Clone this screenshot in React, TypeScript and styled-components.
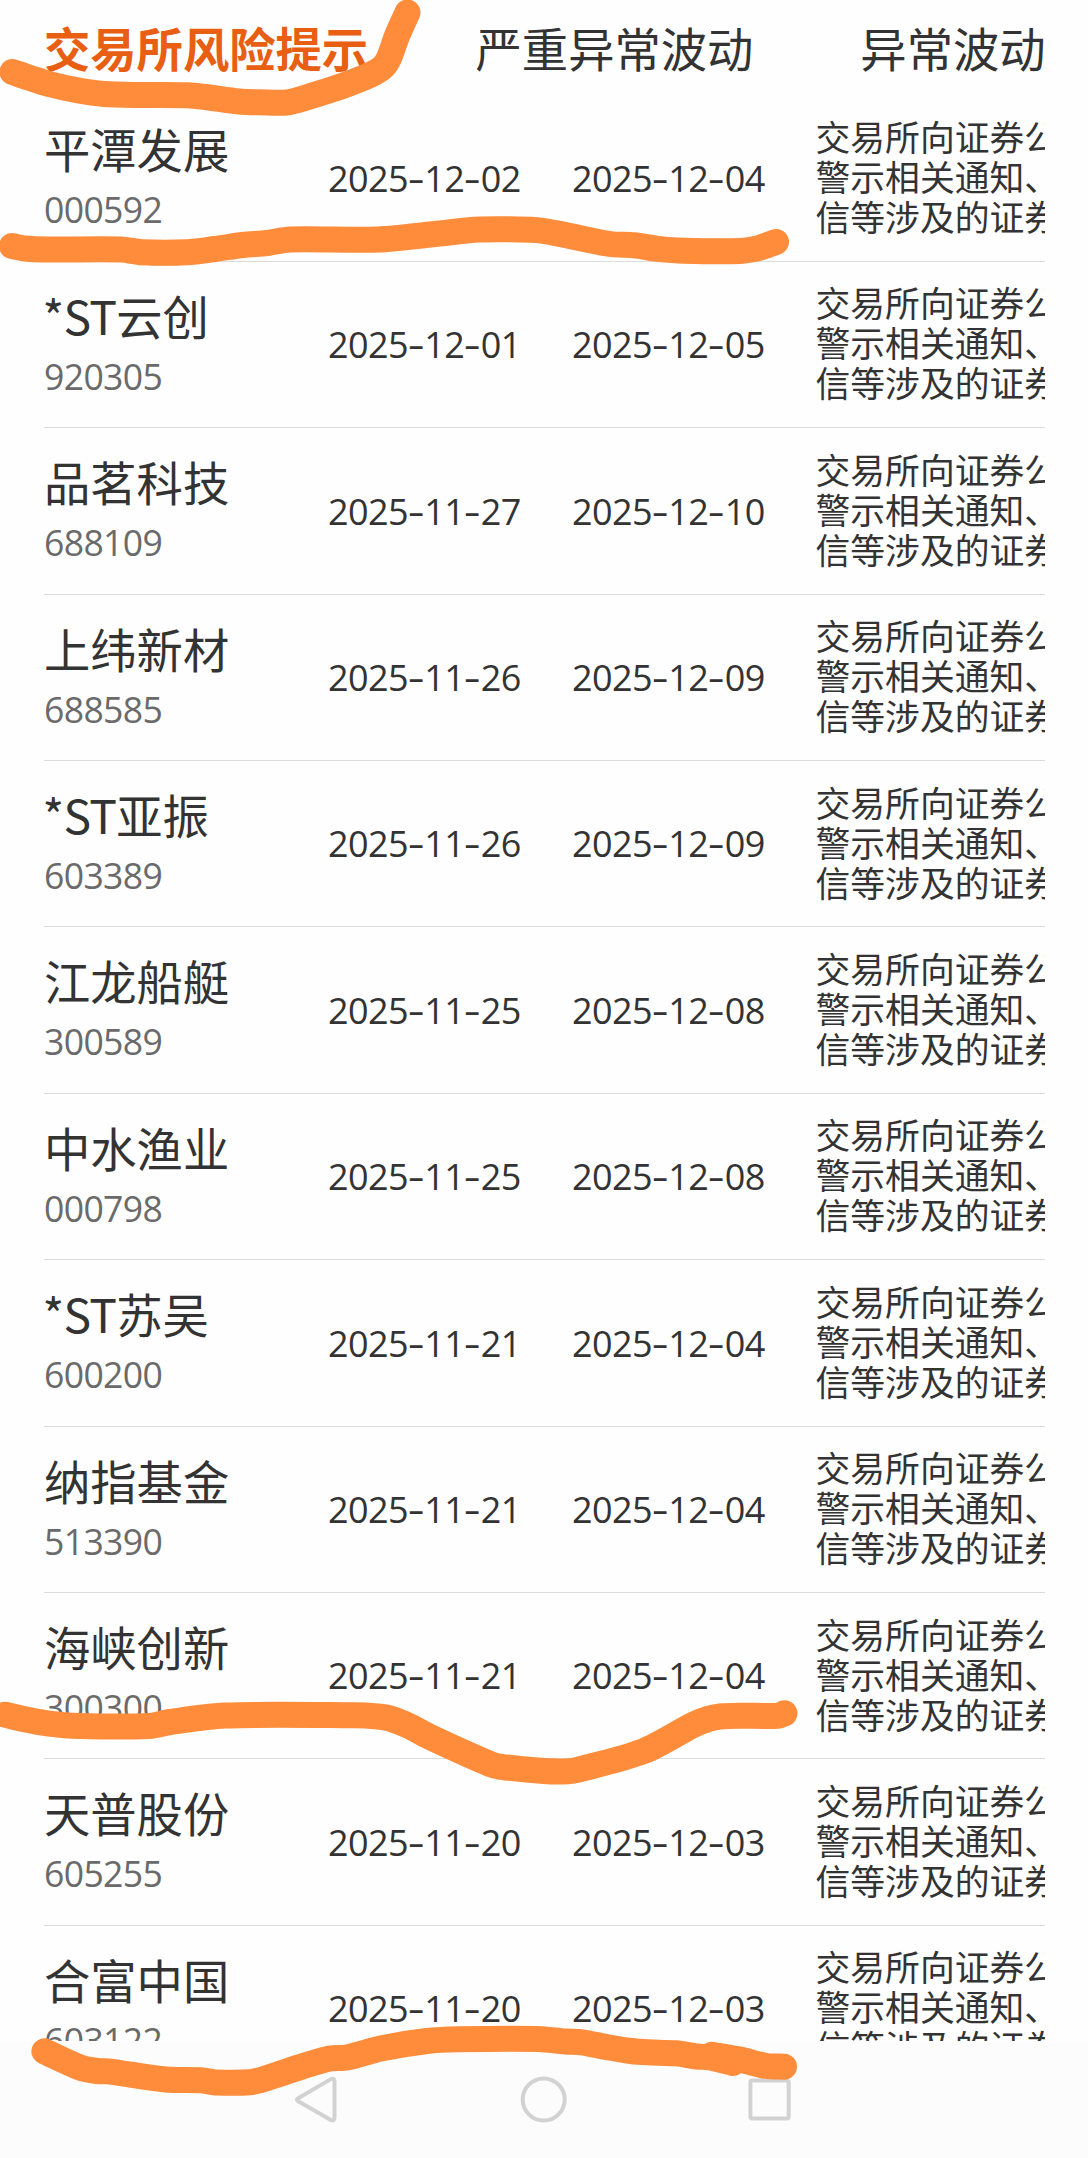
import React from "react";
import styled, { createGlobalStyle } from "styled-components";

const cjk = `"Noto Sans CJK SC", sans-serif`;
const numeric = `"Open Sans", "Noto Sans", sans-serif`;

const GlobalStyle = createGlobalStyle`
  body { margin: 0; background: #fefefe; }
  * { box-sizing: border-box; }
`;

const Screen = styled.div`
  position: relative;
  display: flex;
  flex-direction: column;
  width: 1088px;
  height: 2158px;
  overflow: hidden;
  background: #fefefe;
  color: #333;
  font-family: ${cjk};
`;

const Tabs = styled.nav`
  display: flex;
  flex: none;
  height: 95.4px;
  margin: 0 43px 0 44px;
  padding-top: 12px;
  overflow: hidden;
`;

const Tab = styled.div<{ $active?: boolean; $gap?: number }>`
  flex: none;
  margin-left: ${(p) => p.$gap ?? 0}px;
  font-size: 46.3px;
  line-height: 70px;
  white-space: nowrap;
  font-weight: ${(p) => (p.$active ? 700 : 400)};
  color: ${(p) => (p.$active ? "#e85f14" : "#333")};
`;

const List = styled.main`
  flex: 1;
  min-height: 0;
  overflow: hidden;
  margin: 0 43px 0 44px;
`;

const Row = styled.div`
  display: grid;
  grid-template-columns: 272px 244px 255.5px 1fr;
  height: 166.4px;
  border-bottom: 1px solid #dcdcdc;
`;

const Stock = styled.div`
  display: flex;
  flex-direction: column;
  padding-top: 19px;
`;

const Name = styled.div`
  font-size: 46.3px;
  line-height: 70px;
  height: 70px;
  margin-top: -1px;
  margin-bottom: 1px;
  white-space: nowrap;
`;

const Prefix = styled.span`
  margin-left: -1.5px;
  letter-spacing: -0.7px;
`;

const Code = styled.div`
  font-family: ${numeric};
  font-size: 35.6px;
  line-height: 50px;
  letter-spacing: -0.65px;
  color: #6a6a6a;
`;

const DateCell = styled.div`
  display: flex;
  align-items: center;
  padding: 1.4px 0 0 12px;
  font-family: ${numeric};
  font-size: 36px;
  line-height: 50px;
  letter-spacing: -0.6px;
  white-space: nowrap;
`;

const Dash = styled.span`
  display: inline-block;
  width: 16.4px;
  text-align: center;
  letter-spacing: 0;
  transform: scaleX(1.45);
`;

const Note = styled.div`
  display: flex;
  flex-direction: column;
  justify-content: center;
  padding-bottom: 4px;
  overflow: hidden;
  font-size: 34.8px;
  line-height: 40px;
  white-space: nowrap;
`;

const NavBar = styled.footer`
  flex: none;
  display: flex;
  justify-content: center;
  gap: 178px;
  height: 117px;
  padding-top: 34px;
  background: #fcfcfc;
`;

const NavIcon = styled.svg`
  width: 50px;
  height: 50px;
  fill: none;
  stroke: #d2d2d2;
  stroke-width: 4;
  stroke-linejoin: round;
`;

const Ink = styled.svg`
  position: absolute;
  inset: 0;
  width: 1088px;
  height: 2158px;
  pointer-events: none;
  fill: none;
  stroke: #ff8c3a;
  stroke-width: 26;
  stroke-linecap: round;
  stroke-linejoin: round;
`;

const stocks: [string, string, string, string][] = [
  ["平潭发展", "000592", "2025-12-02", "2025-12-04"],
  ["*ST云创", "920305", "2025-12-01", "2025-12-05"],
  ["品茗科技", "688109", "2025-11-27", "2025-12-10"],
  ["上纬新材", "688585", "2025-11-26", "2025-12-09"],
  ["*ST亚振", "603389", "2025-11-26", "2025-12-09"],
  ["江龙船艇", "300589", "2025-11-25", "2025-12-08"],
  ["中水渔业", "000798", "2025-11-25", "2025-12-08"],
  ["*ST苏吴", "600200", "2025-11-21", "2025-12-04"],
  ["纳指基金", "513390", "2025-11-21", "2025-12-04"],
  ["海峡创新", "300300", "2025-11-21", "2025-12-04"],
  ["天普股份", "605255", "2025-11-20", "2025-12-03"],
  ["合富中国", "603122", "2025-11-20", "2025-12-03"],
];

const noteLines = ["交易所向证券公", "警示相关通知、", "信等涉及的证券"];

const strokes = [
  "12.5,72 30,78 49,84 76,90 104,94 140,95 187,95.3 205,97 239,101.5 260,102.3 288,102.3 319,93.5 345,85 371,74.5 383,67 389,58 397,36 407.5,12.5",
  "12,246 25,248.5 48,249.5 121,249.5 142,252.3 187,252.3 215,249 243,245 267,243 290,239.5 378,239.5 440,233.5 479,229.5 531,229.7 544,231 565,235 610,244 634,245.3 658,248.8 684,250.7 740,251 759,248 776,242",
  "5,1714.7 21,1718.5 47,1723.3 80,1726 149,1726 170,1722 225,1715.5 354,1715.3 378,1716.5 390,1718.5 409,1726 430,1737 490,1764 501,1766.8 544,1771 568,1771.3 579,1769.5 644,1751 693,1725 708,1719 720,1716.5 740,1715.7 778,1715.7 784.5,1713.3",
  "44.4,2051.3 80,2067.5 97,2071 108,2071.3 166,2079.5 201,2080.3 215,2082.4 250,2082.3 264,2079 302,2066.5 330,2058.5 347,2057.5 382,2048.3 427,2041 458,2039.3 538,2039 565,2041.5 582,2042.3 606,2047 631,2051 648,2052.3 676,2053.3 697,2056.5 710,2057.5 733,2063",
  "712,2054.7 742,2060 766,2066 784,2066.7",
];

/* Catmull-Rom spline through the marker's sample points, with short handles. */
function smooth(points: string) {
  const p = points.split(" ").map((s) => s.split(",").map(Number));
  let d = `M${p[0][0]} ${p[0][1]}`;
  for (let i = 0; i < p.length - 1; i++) {
    const a = p[i - 1] ?? p[i];
    const b = p[i];
    const c = p[i + 1];
    const e = p[i + 2] ?? c;
    const len = Math.hypot(c[0] - b[0], c[1] - b[1]);
    const t1 = Math.hypot(c[0] - a[0], c[1] - a[1]) || 1;
    const t2 = Math.hypot(e[0] - b[0], e[1] - b[1]) || 1;
    const h = len / 3.4;
    d += `C${b[0] + ((c[0] - a[0]) / t1) * h} ${b[1] + ((c[1] - a[1]) / t1) * h} ${
      c[0] - ((e[0] - b[0]) / t2) * h} ${c[1] - ((e[1] - b[1]) / t2) * h} ${c[0]} ${c[1]}`;
  }
  return d;
}

function StockName({ text }: { text: string }) {
  return text.startsWith("*ST") ? (
    <Name><Prefix>*ST</Prefix>{text.slice(3)}</Name>
  ) : (
    <Name>{text}</Name>
  );
}

function DateValue({ value }: { value: string }) {
  const [y, m, d] = value.split("-");
  return (
    <DateCell>
      <span>{y}<Dash>-</Dash>{m}<Dash>-</Dash>{d}</span>
    </DateCell>
  );
}

export default function App() {
  return (
    <Screen>
      <GlobalStyle />
      <Tabs>
        <Tab $active>交易所风险提示</Tab>
        <Tab $gap={107.5}>严重异常波动</Tab>
        <Tab $gap={107}>异常波动</Tab>
      </Tabs>
      <List>
        {stocks.map(([name, code, start, end]) => (
          <Row key={code}>
            <Stock>
              <StockName text={name} />
              <Code>{code}</Code>
            </Stock>
            <DateValue value={start} />
            <DateValue value={end} />
            <Note>
              {noteLines.map((line) => <span key={line}>{line}</span>)}
            </Note>
          </Row>
        ))}
      </List>
      <NavBar>
        <NavIcon viewBox="0 0 50 50"><path d="M7.200 23.300 39.800 4.100Q43.500 2.500 43.500 6.300V42.700Q43.500 46.500 39.800 44.900L7.200 26.300Q4.700 24.800 7.200 23.300Z" /></NavIcon>
        <NavIcon viewBox="0 0 50 50"><circle cx="24.7" cy="24.5" r="21" /></NavIcon>
        <NavIcon viewBox="0 0 50 50"><rect x="3.4" y="5.5" width="38.3" height="38" rx="2" /></NavIcon>
      </NavBar>
      <Ink viewBox="0 0 1088 2158">
        {strokes.map((points) => <path key={points} d={smooth(points)} />)}
      </Ink>
    </Screen>
  );
}
